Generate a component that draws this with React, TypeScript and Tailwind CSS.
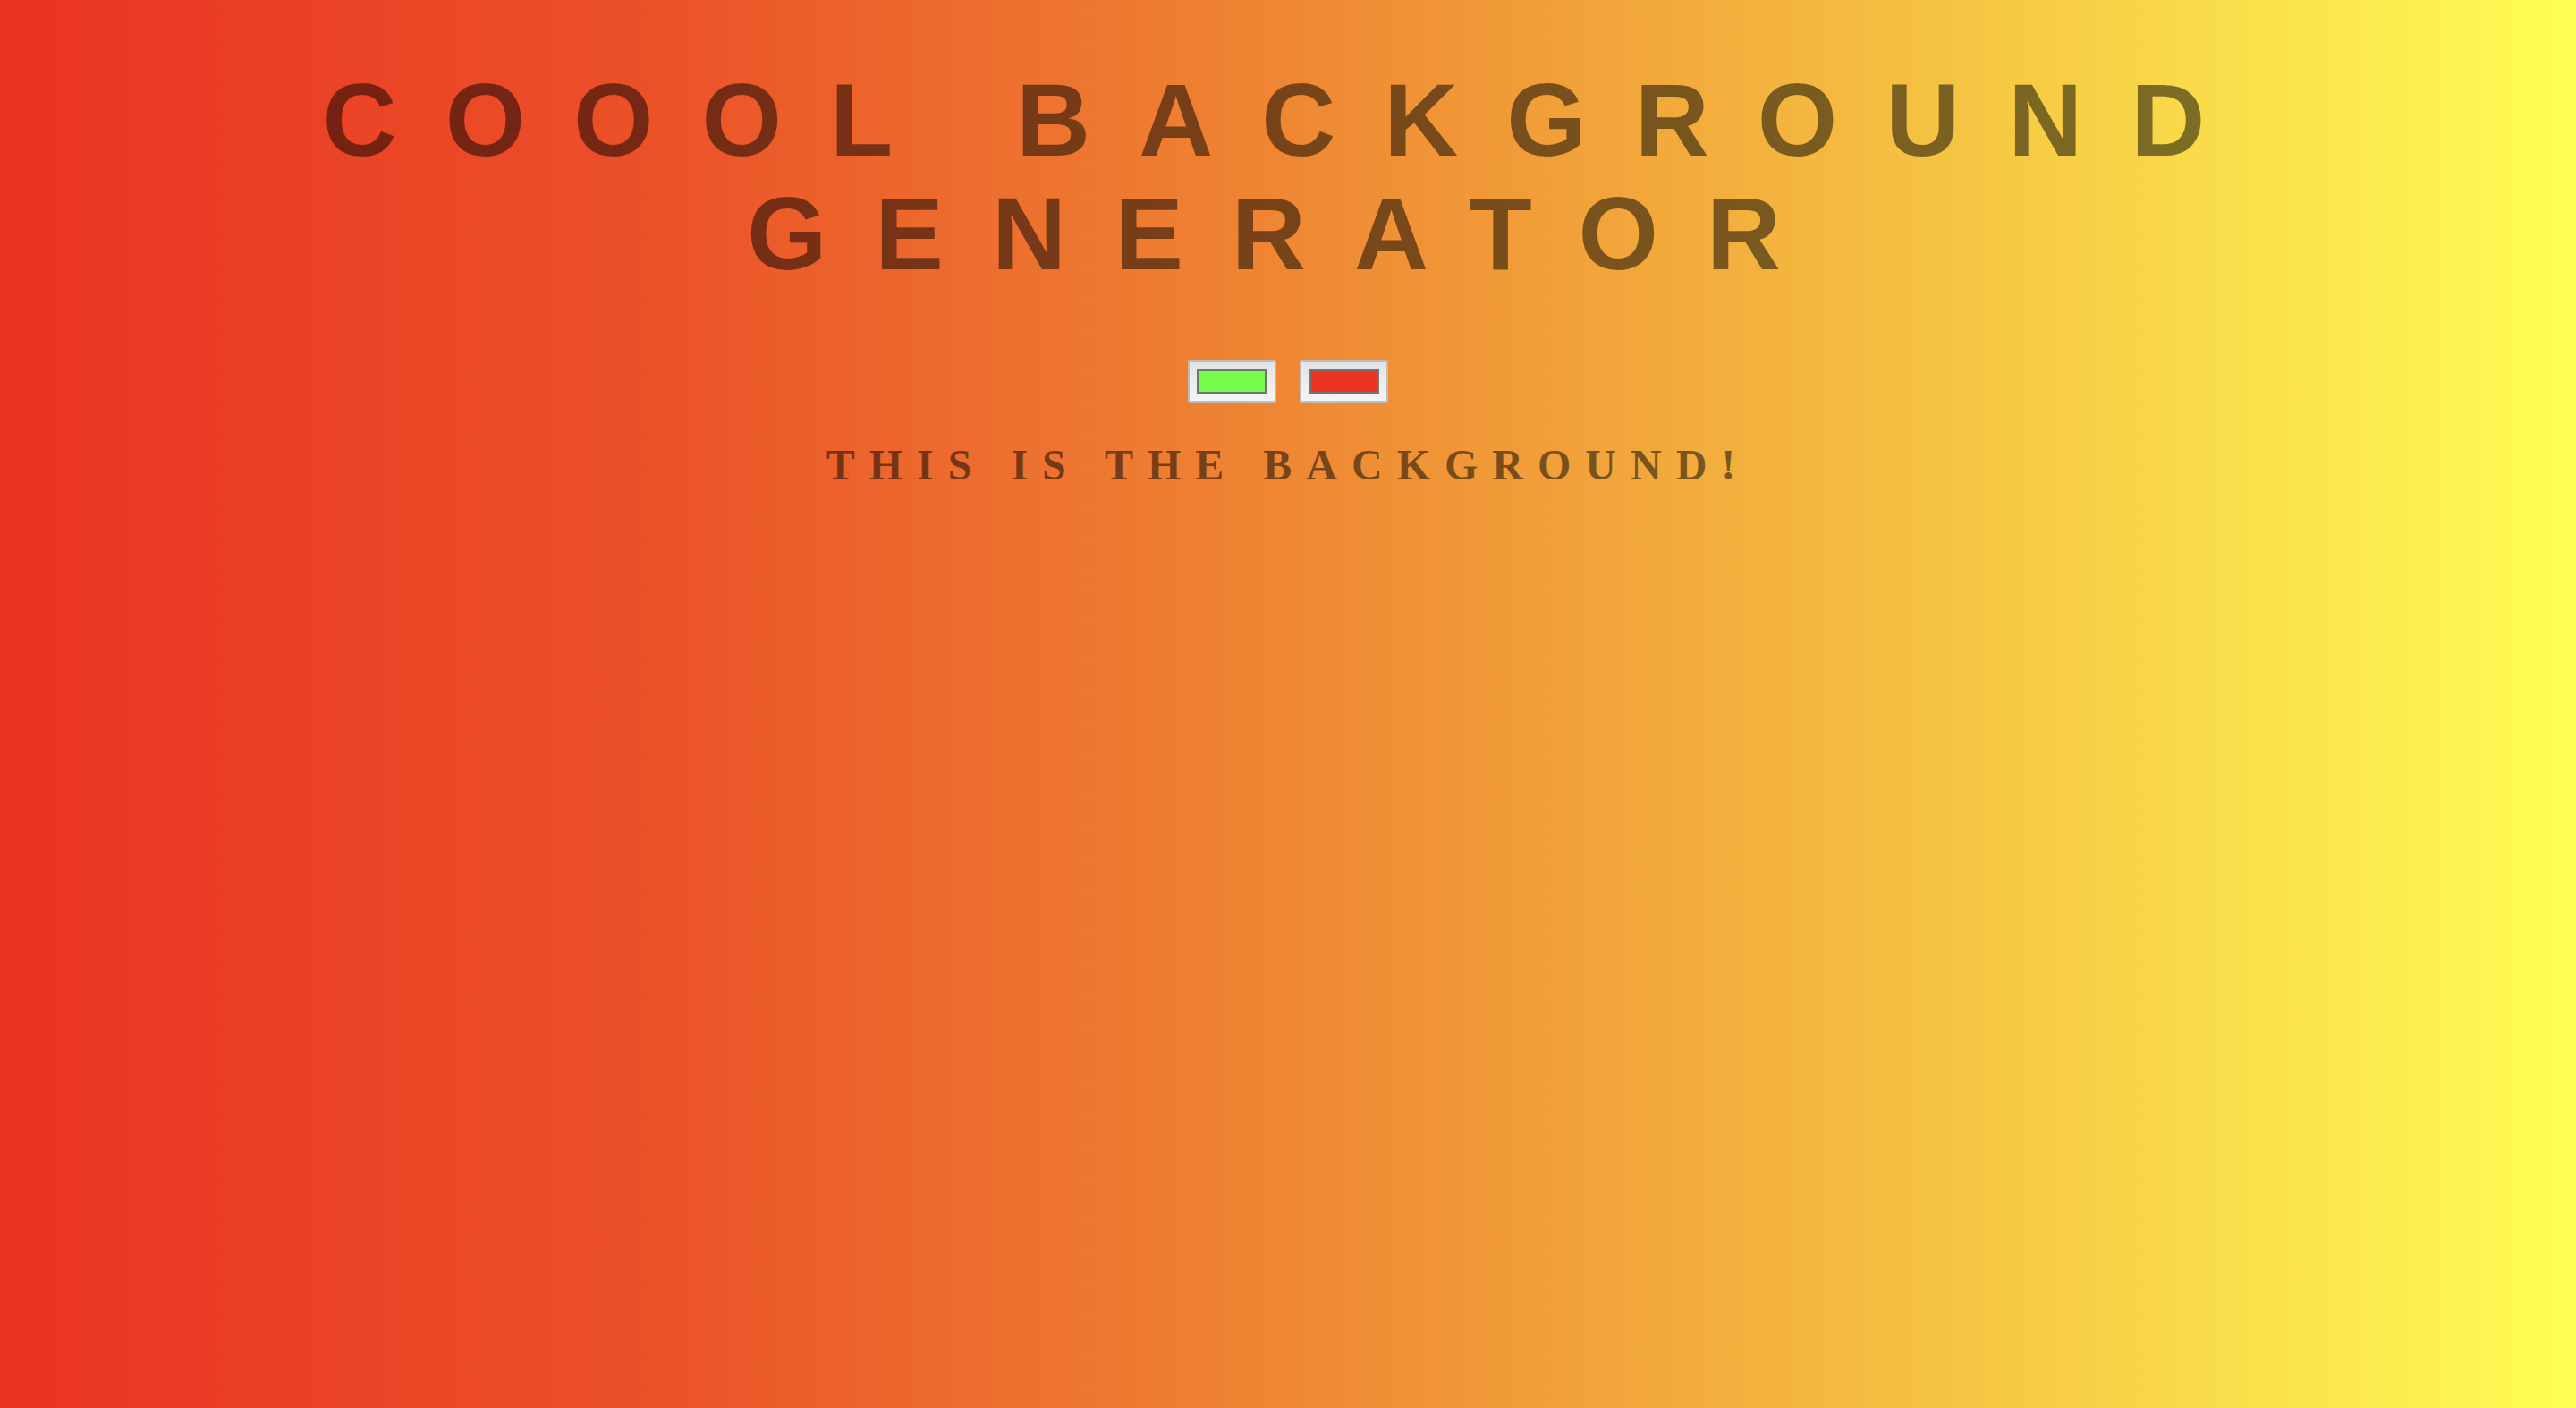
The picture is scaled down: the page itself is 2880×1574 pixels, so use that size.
import React from "react";

function Swatch({ color }: { color: string }) {
  return (
    <button
      type="button"
      className="flex h-[47px] w-[99px] items-center justify-center rounded-[2px] border-2 border-[#bdbdbd] bg-gradient-to-b from-[#e4e4e4] to-[#f4f4f4] p-0"
    >
      <span
        className="block h-[29px] w-[79px] border-[3px] border-[#737373]"
        style={{ backgroundColor: color }}
      />
    </button>
  );
}

export default function App() {
  return (
    <div className="min-h-[1574px] w-full bg-[linear-gradient(to_right,#ea3323_0%,#eb5128_25%,#ef8733_50%,#f5c242_75%,#fffe54_100%)] flex flex-col items-center">
      <h1 className="mt-[71px] w-full text-center font-['Liberation_Sans',Arial,Helvetica,sans-serif] text-[115px] font-bold leading-[127px] tracking-[54px] text-black/50 uppercase">
        Coool Background
        <br />
        Generator
      </h1>
      <div className="mt-[78px] flex gap-[26px]">
        <Swatch color="#75fb4c" />
        <Swatch color="#ea3323" />
      </div>
      <h3 className="mt-[42px] w-full text-center font-['Liberation_Serif','Times_New_Roman',Times,serif] text-[48px] font-bold leading-[55px] tracking-[16px] text-black/50 uppercase">
        This is the background!
      </h3>
    </div>
  );
}
